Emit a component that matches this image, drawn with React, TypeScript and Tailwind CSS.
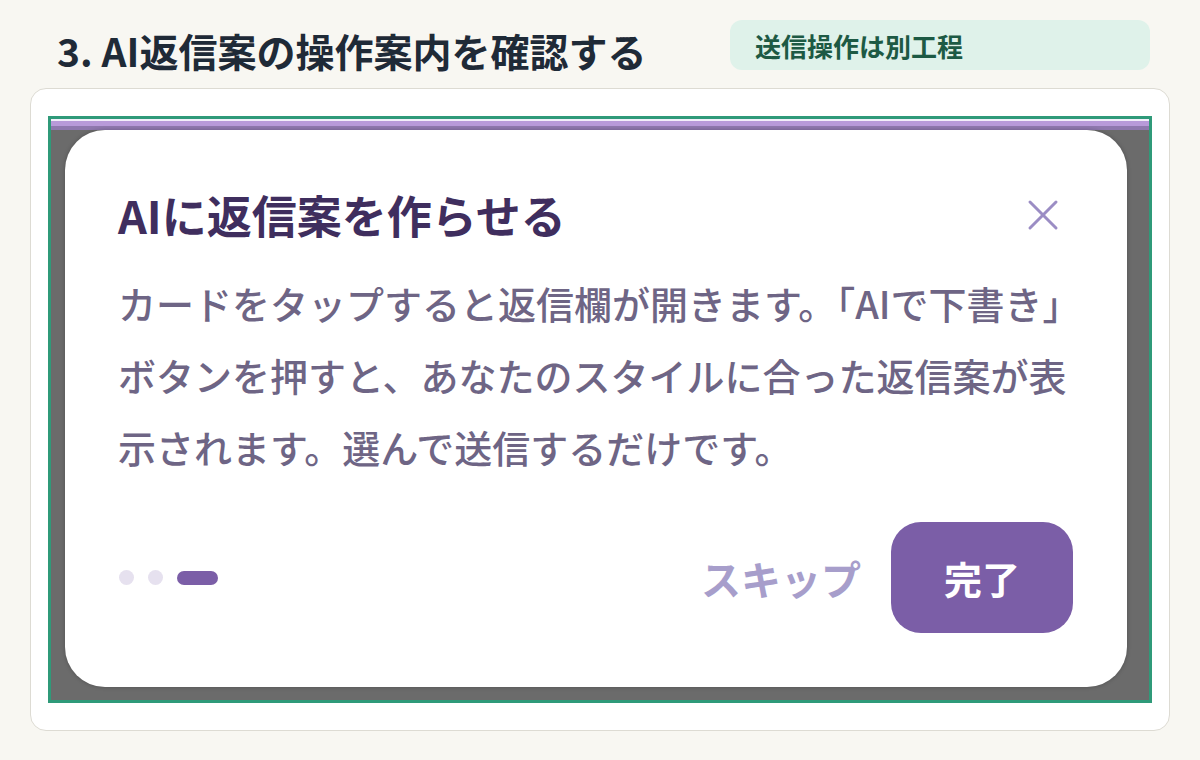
import React from "react";

const FONT = { fontFamily: '"Noto Sans CJK JP", "Noto Sans", sans-serif' };

// 進捗ドット（最後のステップがアクティブ）
const STEPS = [false, false, true];

function CloseIcon() {
  return (
    <svg width="32" height="32" viewBox="0 0 32 32" fill="none" stroke="#9b8dc4" strokeWidth="3" strokeLinecap="round">
      <path d="M3 3 L29 29" />
      <path d="M29 3 L3 29" />
    </svg>
  );
}

function Tooltip() {
  return (
    <div className="flex flex-col h-[557px] ml-[14px] mr-[22px] bg-white rounded-[40px] pl-[53px] pr-[54px] pt-[58px] pb-[54px] shadow-[0_0_4px_rgba(0,0,0,0.25)]">
      <div className="flex items-center justify-between pr-[14px]">
        <h3 className="text-[45px] leading-[54px] font-bold text-[#3f2e5e]">AIに返信案を作らせる</h3>
        <CloseIcon />
      </div>
      <p className="mt-[25px] text-[38px] leading-[72px] font-medium text-[#6e6585] whitespace-nowrap">
        カードをタップすると返信欄が開きます。「AIで下書き」
        <br />
        ボタンを押すと、あなたのスタイルに合った返信案が表
        <br />
        示されます。選んで送信するだけです。
      </p>
      <div className="mt-auto flex items-center justify-between">
        <div className="flex items-center gap-[14px] pl-[1px]">
          {STEPS.map((active, i) =>
            active ? (
              <span key={i} className="h-[14px] w-[41px] rounded-full bg-[#7b5ea7]" />
            ) : (
              <span key={i} className="h-[15px] w-[15px] rounded-full bg-[#e6e1ef]" />
            )
          )}
        </div>
        <div className="flex items-center gap-[30px]">
          <span className="text-[40px] leading-[48px] font-semibold text-[#a79ecb]">スキップ</span>
          <button className="w-[182px] h-[111px] rounded-[30px] bg-[#7b5ea7] text-white text-[38px] font-bold">
            完了
          </button>
        </div>
      </div>
    </div>
  );
}

export default function App() {
  return (
    <div className="min-h-screen bg-[#f8f7f2] px-[30px] pt-[20px]" style={FONT}>
      <div className="flex items-start justify-between">
        <h2 className="pl-[27px] pt-[6px] text-[39px] leading-[48px] font-bold text-[#1f2a37]">
          3. AI返信案の操作案内を確認する
        </h2>
        <div className="mr-[20px] w-[420px] h-[50px] flex items-center rounded-[12px] bg-[#dff2ea] pl-[25px]">
          <span className="text-[26px] font-semibold text-[#1d5a44]">送信操作は別工程</span>
        </div>
      </div>

      <div className="mt-[14px] rounded-[16px] border border-[#dddbd3] bg-white px-[17px] py-[27px]">
        <div className="border-[3px] border-[#2f9a79] bg-[#6b6b6b]">
          <div className="h-[2px] bg-[#f3effa]" />
          <div className="h-[5px] bg-[#b89ad9]" />
          <div className="h-[4px] bg-[#8f78ae]" />
          <div className="pb-[13px]">
            <Tooltip />
          </div>
        </div>
      </div>
    </div>
  );
}
